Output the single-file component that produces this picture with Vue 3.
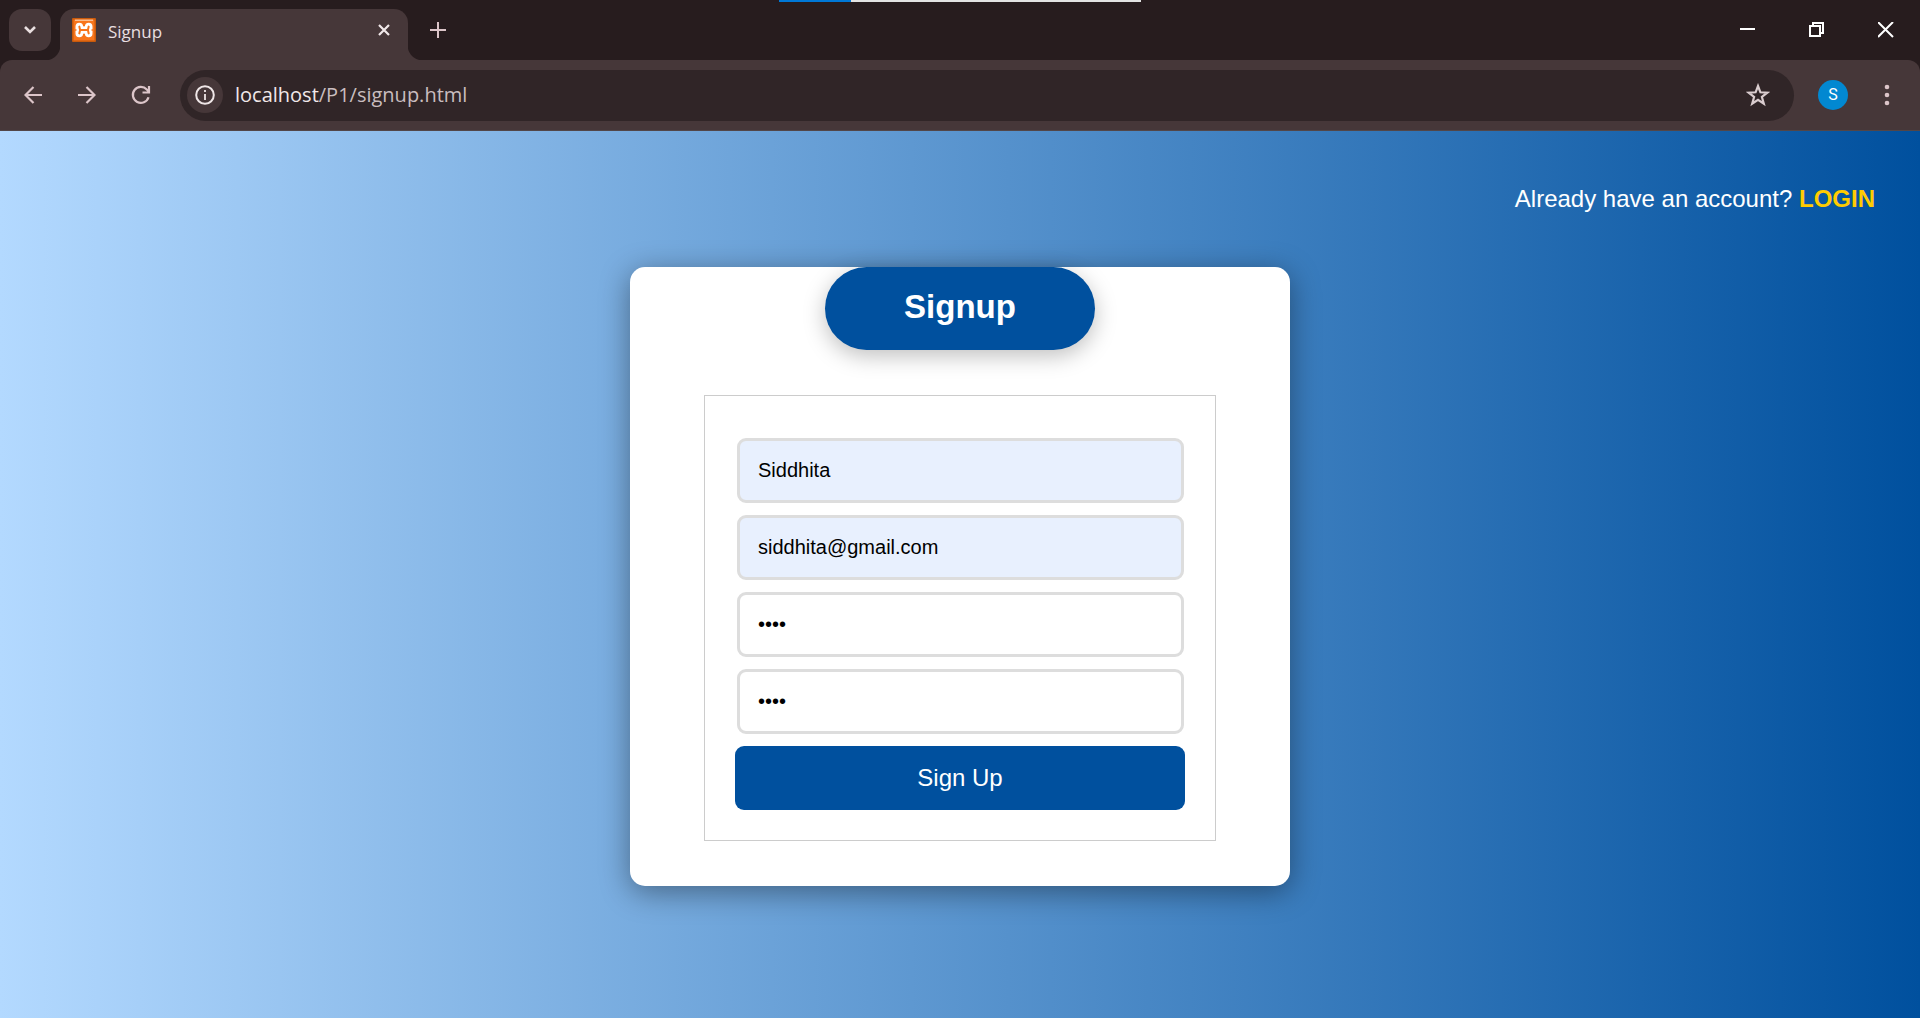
<script setup>
import { ref } from 'vue'

const address = ref('localhost/P1/signup.html')
const fields = ref([
  { id: 'name', label: 'Name', type: 'text', value: 'Siddhita', filled: true },
  { id: 'email', label: 'Email', type: 'email', value: 'siddhita@gmail.com', filled: true },
  { id: 'password', label: 'Password', type: 'password', value: 'pass', filled: false },
  { id: 'confirm', label: 'Confirm password', type: 'password', value: 'pass', filled: false },
])
</script>

<template>
  <div class="window">
    <div class="progress" aria-hidden="true"><span class="progress-done"></span></div>

    <header class="tabstrip">
      <button class="tab-search" aria-label="Search tabs">
        <svg width="14" height="10" viewBox="0 0 14 10"><path d="M2 2l5 5 5-5" fill="none" stroke="#e9dfe0" stroke-width="2.6" /></svg>
      </button>
      <div class="tab">
        <svg class="favicon" width="24" height="24" viewBox="0 0 24 24">
          <rect width="24" height="24" rx="1" fill="#c85a0c" />
          <rect x="1.500" y="1.500" width="21" height="21" fill="#f8751c" />
          <path d="M3 2.200h18" stroke="#fbd0ad" stroke-width="1.200" />
          <g fill="none" stroke-linecap="round">
            <path d="M7.300 8.500v7M16.700 8.500v7M8 12h8" stroke="#fff" stroke-width="7.600" />
            <path d="M7.300 8.600l.8 3.400-.8 3.400M16.700 8.600l-.8 3.400.8 3.400M8.500 12h7" stroke="#f8751c" stroke-width="2" />
            <path d="M12 4.500v3M12 16.500v3" stroke="#f8751c" stroke-width="1.600" />
            <path d="M3.200 12h.8M20 12h.8" stroke="#f8751c" stroke-width="1.400" />
          </g>
        </svg>
        <span class="tab-title">Signup</span>
        <button class="tab-close" aria-label="Close tab">
          <svg width="14" height="14" viewBox="0 0 14 14"><path d="M2 2l10 10M12 2L2 12" stroke="#f1e8e9" stroke-width="2.2" /></svg>
        </button>
      </div>
      <button class="new-tab" aria-label="New tab">
        <svg width="16" height="16" viewBox="0 0 16 16"><path d="M8 0v16M0 8h16" stroke="#dcc5c9" stroke-width="2" /></svg>
      </button>
      <div class="controls">
        <button aria-label="Minimize">
          <svg width="16" height="16" viewBox="0 0 16 16"><path d="M0 7h15" stroke="#fff" stroke-width="2" /></svg>
        </button>
        <button aria-label="Restore">
          <svg width="16" height="16" viewBox="0 0 16 16"><path d="M1 4h10v10H1zM4 4V1h10v10h-3" fill="none" stroke="#fff" stroke-width="2" /></svg>
        </button>
        <button aria-label="Close">
          <svg width="16" height="16" viewBox="0 0 16 16"><path d="M0 0l15 15M15 0L0 15" stroke="#fff" stroke-width="2" /></svg>
        </button>
      </div>
    </header>

    <nav class="toolbar" aria-label="Browser toolbar">
      <button class="tool" aria-label="Back">
        <svg width="18" height="18" viewBox="0 0 18 18"><path d="M18 9H2M9.500 1L1.500 9l8 8" fill="none" stroke="#dcc5c9" stroke-width="2.2" /></svg>
      </button>
      <button class="tool" aria-label="Forward">
        <svg width="18" height="18" viewBox="0 0 18 18"><path d="M0 9h16M8.500 1l8 8-8 8" fill="none" stroke="#dcc5c9" stroke-width="2.2" /></svg>
      </button>
      <button class="tool" aria-label="Reload">
        <svg width="20" height="20" viewBox="0 0 20 20"><path d="M17.500 12.200A8 8 0 1 1 15.800 4.500L17.500 6.300M18 1v6.500h-6.500" fill="none" stroke="#dcc5c9" stroke-width="2.2" /></svg>
      </button>
      <div class="omnibox">
        <button class="site-info" aria-label="View site information">
          <svg width="20" height="20" viewBox="0 0 20 20"><circle cx="10" cy="10" r="8.800" fill="none" stroke="#efe6e7" stroke-width="2" /><path d="M10 9v6M10 5v2" stroke="#efe6e7" stroke-width="1.800" /></svg>
        </button>
        <a class="address" :href="'http://' + address"><span class="host">localhost</span>/P1/signup.html</a>
        <button class="bookmark" aria-label="Bookmark this tab">
          <svg width="24" height="24" viewBox="0 0 24 24"><path d="M12 3l2.400 6.300 7 .4-5.500 4.300 1.900 6.700L12 16.900l-5.800 3.800L8.100 14 2.600 9.700l7-.4z" fill="none" stroke="#dacdcf" stroke-width="2.200" /></svg>
        </button>
      </div>
      <button class="avatar" aria-label="Profile">S</button>
      <button class="menu" aria-label="Browser menu">
        <svg width="6" height="22" viewBox="0 0 6 22"><g fill="#dcc5c9"><circle cx="3" cy="3" r="2.300" /><circle cx="3" cy="11" r="2.300" /><circle cx="3" cy="19" r="2.300" /></g></svg>
      </button>
    </nav>

    <main class="page">
      <p class="login">Already have an account? <a href="#login">LOGIN</a></p>
      <section class="card">
        <h1>Signup</h1>
        <form @submit.prevent>
          <template v-for="field in fields" :key="field.id">
            <input
              :id="field.id"
              v-model="field.value"
              :type="field.type"
              :aria-label="field.label"
              :class="{ filled: field.filled }"
              autocomplete="off"
            />
          </template>
          <button class="submit" type="submit">Sign Up</button>
        </form>
      </section>
    </main>
  </div>
</template>

<style>
body {
  margin: 0;
  background: #271c1e;
}
</style>

<style scoped>
.window {
  position: relative;
  display: flex;
  flex-direction: column;
  min-height: 100vh;
  font-family: "Liberation Sans", Arial, sans-serif;
}

button {
  display: flex;
  align-items: center;
  justify-content: center;
  padding: 0;
  border: 0;
  background: none;
  font-family: inherit;
  cursor: pointer;
}

svg {
  display: block;
  flex: none;
}

.progress {
  position: absolute;
  top: 0;
  left: 50%;
  width: 362px;
  height: 2px;
  transform: translateX(-50%);
  background: #e3e3e3;
}

.progress-done {
  display: block;
  width: 20%;
  height: 100%;
  background: #0078d7;
}

.tabstrip {
  display: flex;
  height: 60px;
  background: #271c1e;
}

.tab-search {
  width: 42px;
  height: 42px;
  margin: 9px 9px 0;
  border-radius: 13px;
  background: #463739;
}

.tab {
  position: relative;
  display: flex;
  box-sizing: border-box;
  align-items: center;
  width: 348px;
  margin-top: 9px;
  padding: 0 17px 9px 12px;
  border-radius: 14px 14px 0 0;
  background: #463739;
}

.tab::before,
.tab::after {
  content: "";
  position: absolute;
  bottom: 0;
  width: 15px;
  height: 15px;
}

.tab::before {
  right: 100%;
  background: radial-gradient(circle at 0 0, transparent 15px, #463739 16px);
}

.tab::after {
  left: 100%;
  background: radial-gradient(circle at 100% 0, transparent 15px, #463739 16px);
}

.tab-title {
  flex: 1;
  margin-left: 12px;
  padding-top: 3px;
  color: #e9dfe0;
  font: 17px/24px "Open Sans", "Noto Sans", sans-serif;
}

.new-tab {
  width: 60px;
}

.controls {
  display: flex;
  margin-left: auto;
}

.controls button {
  width: 69px;
}

.toolbar {
  display: flex;
  box-sizing: border-box;
  align-items: center;
  height: 71px;
  padding: 0 15px 0 6px;
  border-bottom: 1px solid #524648;
  border-radius: 12px 12px 0 0;
  background: #463739;
}

.tool {
  width: 54px;
  height: 48px;
}

.omnibox {
  display: flex;
  flex: 1;
  align-items: center;
  height: 51px;
  margin-left: 12px;
  padding: 0 24px 0 7px;
  border-radius: 26px;
  background: #302527;
}

.site-info {
  width: 36px;
  height: 36px;
  border-radius: 50%;
  background: #463739;
}

.address {
  flex: 1;
  margin-left: 12px;
  color: #c9bdbf;
  font: 20px/28px "Open Sans", "Noto Sans", sans-serif;
  text-decoration: none;
}

.host {
  color: #f1e8e9;
}

.avatar {
  width: 30px;
  height: 30px;
  margin-left: 24px;
  border-radius: 50%;
  background: #0288d1;
  color: #fff;
  font: 16px/20px Roboto, sans-serif;
}

.menu {
  width: 36px;
  height: 36px;
  margin-left: 21px;
}

.page {
  display: flex;
  flex: 1;
  flex-direction: column;
  align-items: center;
  padding-bottom: 45px;
  background: linear-gradient(to right, #b3d9ff, #00509e);
}

.login {
  align-self: flex-end;
  margin: 54px 45px 0;
  color: #fff;
  font-size: 24px;
  line-height: 28px;
}

.login a {
  color: #ffcc00;
  font-weight: bold;
  text-decoration: none;
}

.card {
  display: flex;
  box-sizing: border-box;
  flex-direction: column;
  align-items: center;
  width: 100%;
  max-width: 660px;
  margin-top: 54px;
  padding: 0 74px 45px;
  border-radius: 15px;
  background: #fff;
  box-shadow: 0 6px 30px rgba(0, 0, 0, 0.4);
}

h1 {
  box-sizing: border-box;
  width: 270px;
  margin: 0 0 45px;
  padding: 21px 0 24px;
  border-radius: 45px;
  background: #00509e;
  box-shadow: 0 6px 22px rgba(0, 0, 0, 0.25);
  color: #fff;
  font-size: 33px;
  line-height: 38px;
  text-align: center;
}

form {
  display: flex;
  box-sizing: border-box;
  flex-direction: column;
  gap: 12px;
  width: 100%;
  padding: 42px 30px 30px;
  border: 1px solid #ccc;
}

input {
  box-sizing: border-box;
  height: 65px;
  margin: 0 1px 0 2px;
  padding: 0 18px;
  border: 3px solid #ddd;
  border-radius: 9px;
  outline: none;
  background: #fff;
  color: #000;
  font: 20px "Liberation Sans", Arial, sans-serif;
}

input.filled {
  background: #e8f0fe;
}

.submit {
  height: 64px;
  border-radius: 9px;
  background: #00509e;
  color: #fff;
  font-size: 24px;
}
</style>
